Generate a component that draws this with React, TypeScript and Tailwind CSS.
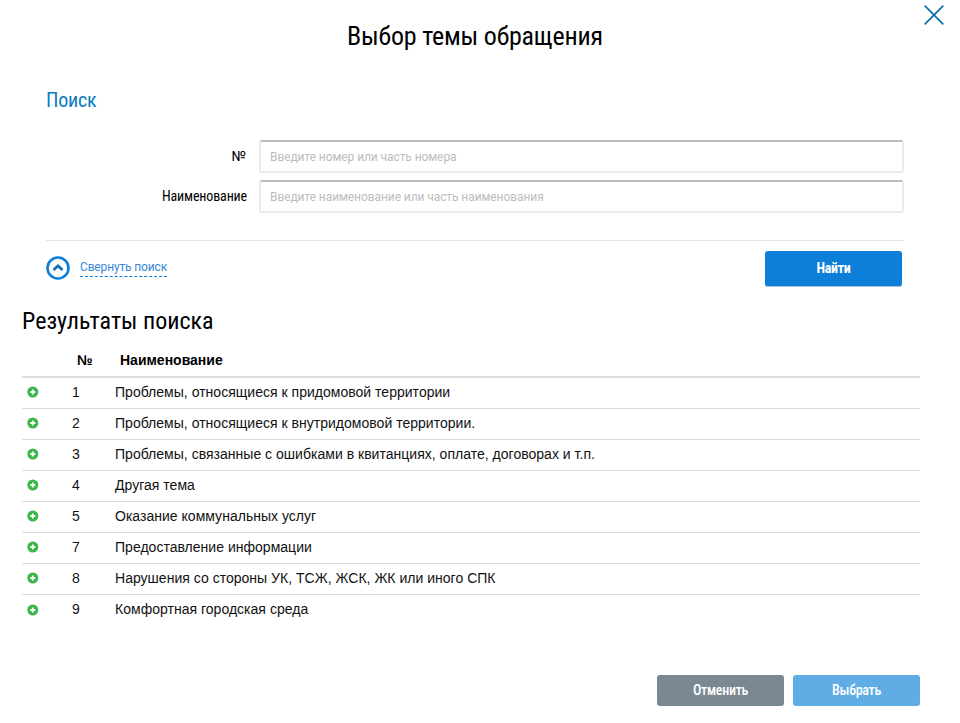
import React from 'react';

const ROWS: [string, string][] = [
  ['1', 'Проблемы, относящиеся к придомовой территории'],
  ['2', 'Проблемы, относящиеся к внутридомовой территории.'],
  ['3', 'Проблемы, связанные с ошибками в квитанциях, оплате, договорах и т.п.'],
  ['4', 'Другая тема'],
  ['5', 'Оказание коммунальных услуг'],
  ['7', 'Предоставление информации'],
  ['8', 'Нарушения со стороны УК, ТСЖ, ЖСК, ЖК или иного СПК'],
  ['9', 'Комфортная городская среда'],
];

const condensed = "font-['Roboto',sans-serif] [font-stretch:75%]";

const PlusIcon = () => (
  <svg width="12" height="12" viewBox="0 0 12 12">
    <circle cx="5.8" cy="6" r="5.5" fill="#3cb54a" />
    <path d="M5.8 3.5v5M3.3 6h5" stroke="#fff" strokeWidth="1.8" />
  </svg>
);

const Field: React.FC<{ label: string; placeholder: string; labelClass: string }> = ({ label, placeholder, labelClass }) => (
  <div className="flex items-center h-[33px]">
    <label className={`w-[201px] text-right text-black ${labelClass}`}>{label}</label>
    <div className="ml-[12px] w-[645px] h-[33px] flex items-center pl-[9px] bg-white rounded-[3px] border-2 border-[#e8ebee] border-t-[#bcbfc2] text-[12px] tracking-[-0.08px] text-[#bcbcbc] font-['Roboto',sans-serif]">
      {placeholder}
    </div>
  </div>
);

export default function App() {
  return (
    <div className="relative w-[960px] h-[723px] bg-white overflow-hidden font-['Liberation_Sans',sans-serif]">
      <button className="absolute left-[924px] top-[5px]">
        <svg width="20" height="20" viewBox="0 0 20 20" className="block">
          <path d="M0.7 0.7L19.3 19.3M19.3 0.7L0.7 19.3" stroke="#0a6ea8" strokeWidth="1.7" />
        </svg>
      </button>

      <h1 className={`pt-[21px] pr-[10px] h-[76px] text-center text-[26px] leading-[30px] text-black tracking-[-0.2px] ${condensed}`}>
        Выбор темы обращения
      </h1>

      <div className="ml-[46px] w-[858px]">
        <h2 className={`h-[64px] pt-[14px] text-[20px] leading-[21px] tracking-[-0.2px] text-[#0b7bc4] ${condensed}`}>Поиск</h2>
        <div className="flex flex-col gap-[7px]">
          <Field labelClass="text-[14px] font-['Roboto',sans-serif] pr-[1px]" label="№" placeholder="Введите номер или часть номера" />
          <Field labelClass={`text-[14px] tracking-[-0.15px] ${condensed}`} label="Наименование" placeholder="Введите наименование или часть наименования" />
        </div>
        <div className="mt-[27px] border-t border-[#e3e5e7] pt-[10px] flex justify-between">
          <div className="flex items-start pt-[5px]">
            <svg width="24" height="24" viewBox="0 0 24 24" className="block">
              <circle cx="12" cy="12" r="10.5" fill="none" stroke="#0e7fd9" strokeWidth="2.6" />
              <path d="M7.5 14L12 9.8L16.5 14" fill="none" stroke="#0b6db5" strokeWidth="2.6" />
            </svg>
            <span className="ml-[10px] mt-[3px] h-[18px] border-b border-dashed border-[#0e7fd9] text-[12px] leading-[16px] tracking-[-0.15px] text-[#3a86d8] font-['Roboto',sans-serif]">
              Свернуть поиск
            </span>
          </div>
          <button className={`mr-[2px] w-[137px] h-[36px] rounded-[3px] bg-[#0e7fd9] border-b border-[#a9c0d4] text-white text-[14px] font-bold tracking-[-0.3px] ${condensed}`}>
            Найти
          </button>
        </div>
      </div>

      <h2 className={`ml-[22px] mt-[19px] text-[24px] leading-[30px] text-black ${condensed}`}>Результаты поиска</h2>

      <div className="ml-[22px] w-[898px] mt-[9px] text-[14px] text-[#111]">
        <div className="flex h-[33px] items-center border-b-2 border-[#dcdcdc] font-bold text-black">
          <span className="ml-[55px] w-[43px]">№</span>
          <span>Наименование</span>
        </div>
        {ROWS.map(([num, name], i) => (
          <div key={num} className={`flex h-[31px] pb-[2px] items-center ${i < ROWS.length - 1 ? 'border-b border-[#dcdcdc]' : ''}`}>
            <span className="ml-[5px] w-[45px] flex"><PlusIcon /></span>
            <span className="w-[43px]">{num}</span>
            <span className="tracking-[0.02px]">{name}</span>
          </div>
        ))}
      </div>

      <div className="absolute left-[657px] top-[675px] flex gap-[9px]">
        <button className={`w-[127px] h-[31px] rounded-[3px] bg-[#7a8892] text-white text-[14px] font-medium tracking-[-0.3px] ${condensed}`}>Отменить</button>
        <button className={`w-[127px] h-[31px] rounded-[3px] bg-[#60ade6] text-white text-[14px] font-medium tracking-[-0.3px] ${condensed}`}>Выбрать</button>
      </div>
    </div>
  );
}
